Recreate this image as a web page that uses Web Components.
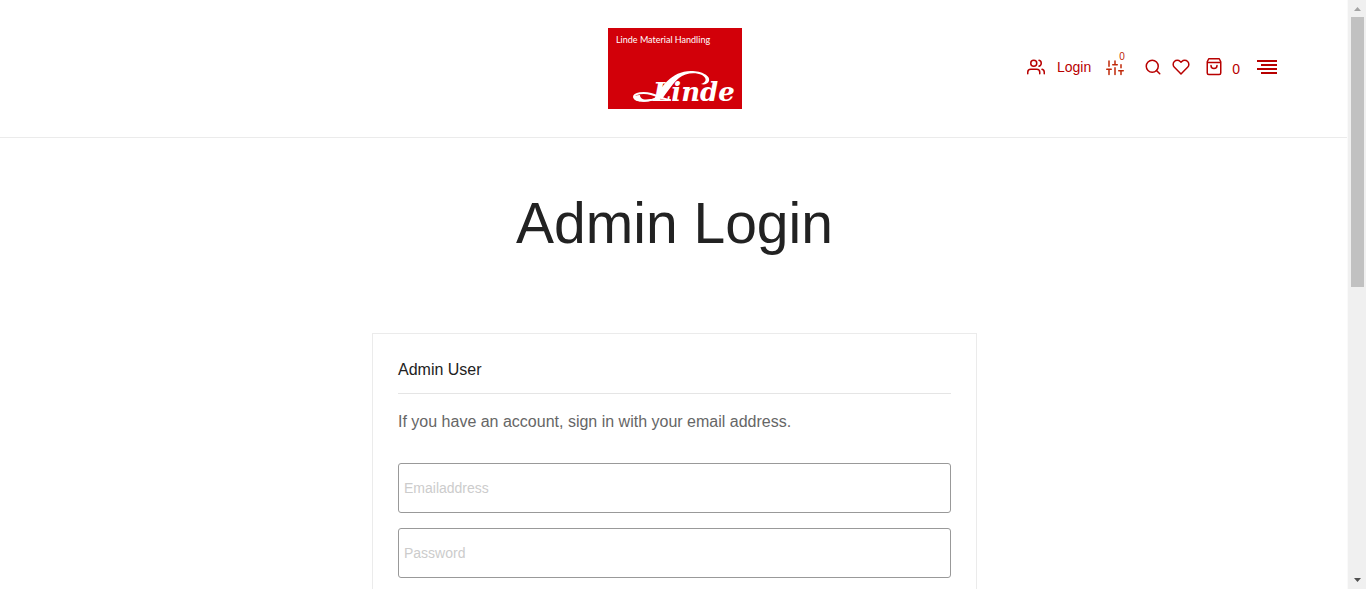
<!DOCTYPE html>
<html lang="en">
<head>
<meta charset="utf-8">
<meta name="viewport" content="width=device-width, initial-scale=1">
<title>Admin Login</title>
<style>
  body { margin: 0; background: #fff; font-family: "Liberation Sans", Arial, sans-serif; font-size: 16px; color: #222; }
</style>
</head>
<body>
<app-shell>
  <site-header slot="header">
    <brand-logo slot="logo"></brand-logo>
    <header-actions slot="actions"></header-actions>
  </site-header>
  <page-title>Admin Login</page-title>
  <login-card>
    <span slot="heading">Admin User</span>
    <span slot="intro">If you have an account, sign in with your email address.</span>
    <form-field type="email" name="email" label="Emailaddress"></form-field>
    <form-field type="password" name="password" label="Password"></form-field>
  </login-card>
  <scroll-track slot="scroll"></scroll-track>
</app-shell>

<script>
const define = (name, html, setup) => {
  const template = document.createElement('template');
  template.innerHTML = html;
  customElements.define(name, class extends HTMLElement {
    constructor() {
      super();
      this.attachShadow({ mode: 'open' }).append(template.content.cloneNode(true));
    }
    connectedCallback() { if (setup) setup(this, this.shadowRoot); }
  });
};

define('app-shell', `
  <style>
    :host { display: grid; grid-template-columns: minmax(0, 1fr) 17px; height: 100vh; overflow: hidden; }
    .page { overflow: hidden; min-height: 0; }
  </style>
  <div class="page"><slot name="header"></slot><main><slot></slot></main></div>
  <slot name="scroll"></slot>`);

define('site-header', `
  <style>
    :host { display: block; border-bottom: 1px solid #ebebeb; }
    header { display: grid; grid-template-columns: 1fr auto 1fr; align-items: center; padding: 28px 72px; }
    .logo { grid-column: 2; }
    .actions { justify-self: end; }
  </style>
  <header>
    <div class="logo"><slot name="logo"></slot></div>
    <div class="actions"><slot name="actions"></slot></div>
  </header>`);

define('brand-logo', `
  <style>
    :host { display: block; }
    a, svg { display: block; }
    text { fill: #fff; }
    .tag { font: 9px Lato, "Open Sans", sans-serif; }
    .word { font: italic bold 26px "DejaVu Serif", serif; }
    .swash { fill: none; stroke: #fff; stroke-linecap: round; stroke-linejoin: round; }
  </style>
  <a href="#" aria-label="Linde Material Handling">
    <svg width="134" height="81" viewBox="0 0 134 81">
      <rect width="134" height="81" fill="#d20009"/>
      <text class="tag" x="8" y="15">Linde Material Handling</text>
      <text class="word" x="45" y="73">Linde</text>
      <path d="M47 70C53 60 63 43 83 43C94 43 103 48 101 53C100 56 96 57 93 56C99 54 99 50 94 47C87 44 77 45 71 50C65 55 60 63 54 71Z" fill="#fff"/>
      <path class="swash" stroke-width="2" d="M50 69C43 74 27 74 26 69C26 65 36 64 43 66C50 68 55 71 62 72"/>
      <path d="M26 69C26 74 38 75 45 72L43 71C37 73 32 71 32 67C28 67 26 68 26 69Z" fill="#fff"/>
    </svg>
  </a>`);

define('header-actions', `
  <style>
    :host { display: block; color: #b80000; font-size: 14px; line-height: 20px; padding-bottom: 4px; }
    nav, a, button { display: flex; align-items: center; }
    a, button { color: inherit; text-decoration: none; font: inherit; background: none; border: 0; padding: 0; }
    svg { display: block; width: 18px; height: 18px; fill: none; stroke: currentColor; stroke-width: 2; stroke-linecap: round; stroke-linejoin: round; }
    .login { gap: 12px; margin-right: 15px; }
    .compare { position: relative; margin-right: 20px; color: #c02808; }
    .compare span { position: absolute; left: 13px; top: -11px; font-size: 10px; }
    .search { margin-right: 10px; }
    .wish { margin-right: 15px; }
    .bag { gap: 9px; margin-right: 17px; }
    .bag span { padding-top: 4px; }
    .menu svg { width: 20px; height: 20px; stroke: none; }
    .menu path { fill: currentColor; }
  </style>
  <nav aria-label="Account">
    <a class="login" href="#">
      <svg viewBox="0 0 24 24"><path d="M17 21v-2a4 4 0 0 0-4-4H5a4 4 0 0 0-4 4v2"/><circle cx="9" cy="7" r="4"/><path d="M23 21v-2a4 4 0 0 0-3-3.87M16 3.13a4 4 0 0 1 0 7.75"/></svg>
      <span>Login</span>
    </a>
    <a class="compare" href="#" aria-label="Compare">
      <svg viewBox="0 0 24 24"><path d="M4 22v-7M4 11V4M12 22v-9M12 9V4M20 22v-5M20 13V9M1 15h6M9 9h6M17 17h6"/></svg>
      <span>0</span>
    </a>
    <button class="search" type="button" aria-label="Search">
      <svg viewBox="0 0 24 24"><circle cx="11" cy="11" r="8"/><path d="M21 21l-4.35-4.35"/></svg>
    </button>
    <a class="wish" href="#" aria-label="Wishlist">
      <svg viewBox="0 0 24 24"><path d="M20.84 4.61a5.5 5.5 0 0 0-7.78 0L12 5.67l-1.06-1.06a5.5 5.5 0 0 0-7.78 7.78l1.06 1.06L12 21.23l7.78-7.78 1.06-1.06a5.5 5.5 0 0 0 0-7.78z"/></svg>
    </a>
    <a class="bag" href="#" aria-label="Cart">
      <svg viewBox="0 0 24 24"><path d="M5 1L3 5v15a2 2 0 0 0 2 2h14a2 2 0 0 0 2-2V5l-2-4zM3 6h18M16 10a4 4 0 0 1-8 0"/></svg>
      <span>0</span>
    </a>
    <button class="menu" type="button" aria-label="Menu">
      <svg viewBox="0 0 20 20"><path d="M0 3h20v2H0zM4 7h16v2H4zM0 11h20v2H0zM4 15h16v2H4z"/></svg>
    </button>
  </nav>`);

define('page-title', `
  <style>
    :host { display: block; padding: 50px 16px 75px; text-align: center; }
    h1 { margin: 0; font-size: 57px; line-height: 70px; font-weight: 400; color: #222; }
  </style>
  <h1><slot></slot></h1>`);

define('login-card', `
  <style>
    :host { display: block; box-sizing: border-box; max-width: 605px; margin: 0 auto; padding: 25px; border: 1px solid #ebebeb; }
    h2 { margin: 0 0 15px; padding-bottom: 12px; border-bottom: 1px solid #e5e5e5; font-size: 16px; line-height: 22px; font-weight: 400; color: #222; }
    p { margin: 0 0 28px; line-height: 26px; color: #666; }
    form { display: grid; gap: 15px; }
  </style>
  <h2><slot name="heading"></slot></h2>
  <p><slot name="intro"></slot></p>
  <form><slot></slot></form>`);

define('form-field', `
  <style>
    :host { display: block; }
    input { display: block; box-sizing: border-box; width: 100%; height: 50px; margin: 0; padding: 0 5px; border: 1px solid #999; border-radius: 3px; background: #fff; color: #222; font: inherit; font-size: 14px; }
    input::placeholder { color: #ccc; opacity: 1; }
  </style>
  <input>`, (host, root) => {
  const input = root.querySelector('input');
  input.type = host.getAttribute('type');
  input.name = host.getAttribute('name');
  input.placeholder = host.getAttribute('label');
  input.setAttribute('aria-label', host.getAttribute('label'));
});

define('scroll-track', `
  <style>
    :host { display: flex; flex-direction: column; background: #f0f0f0; box-shadow: -1px 0 #f0f0f0, -2px 0 #fafafa; z-index: 1; }
    svg { display: block; width: 17px; height: 17px; flex: none; }
    .thumb { flex: 270 0 0; margin: 0 2px; background: #c1c1c1; }
    .rest { flex: 285 0 0; }
  </style>
  <svg viewBox="0 0 17 17" aria-hidden="true"><path d="M5 11L8.500 7L12 11z" fill="#a3a3a3"/></svg>
  <div class="thumb"></div>
  <div class="rest"></div>
  <svg viewBox="0 0 17 17" aria-hidden="true"><path d="M5 6h7L8.500 10z" fill="#505050"/></svg>`);
</script>
</body>
</html>
